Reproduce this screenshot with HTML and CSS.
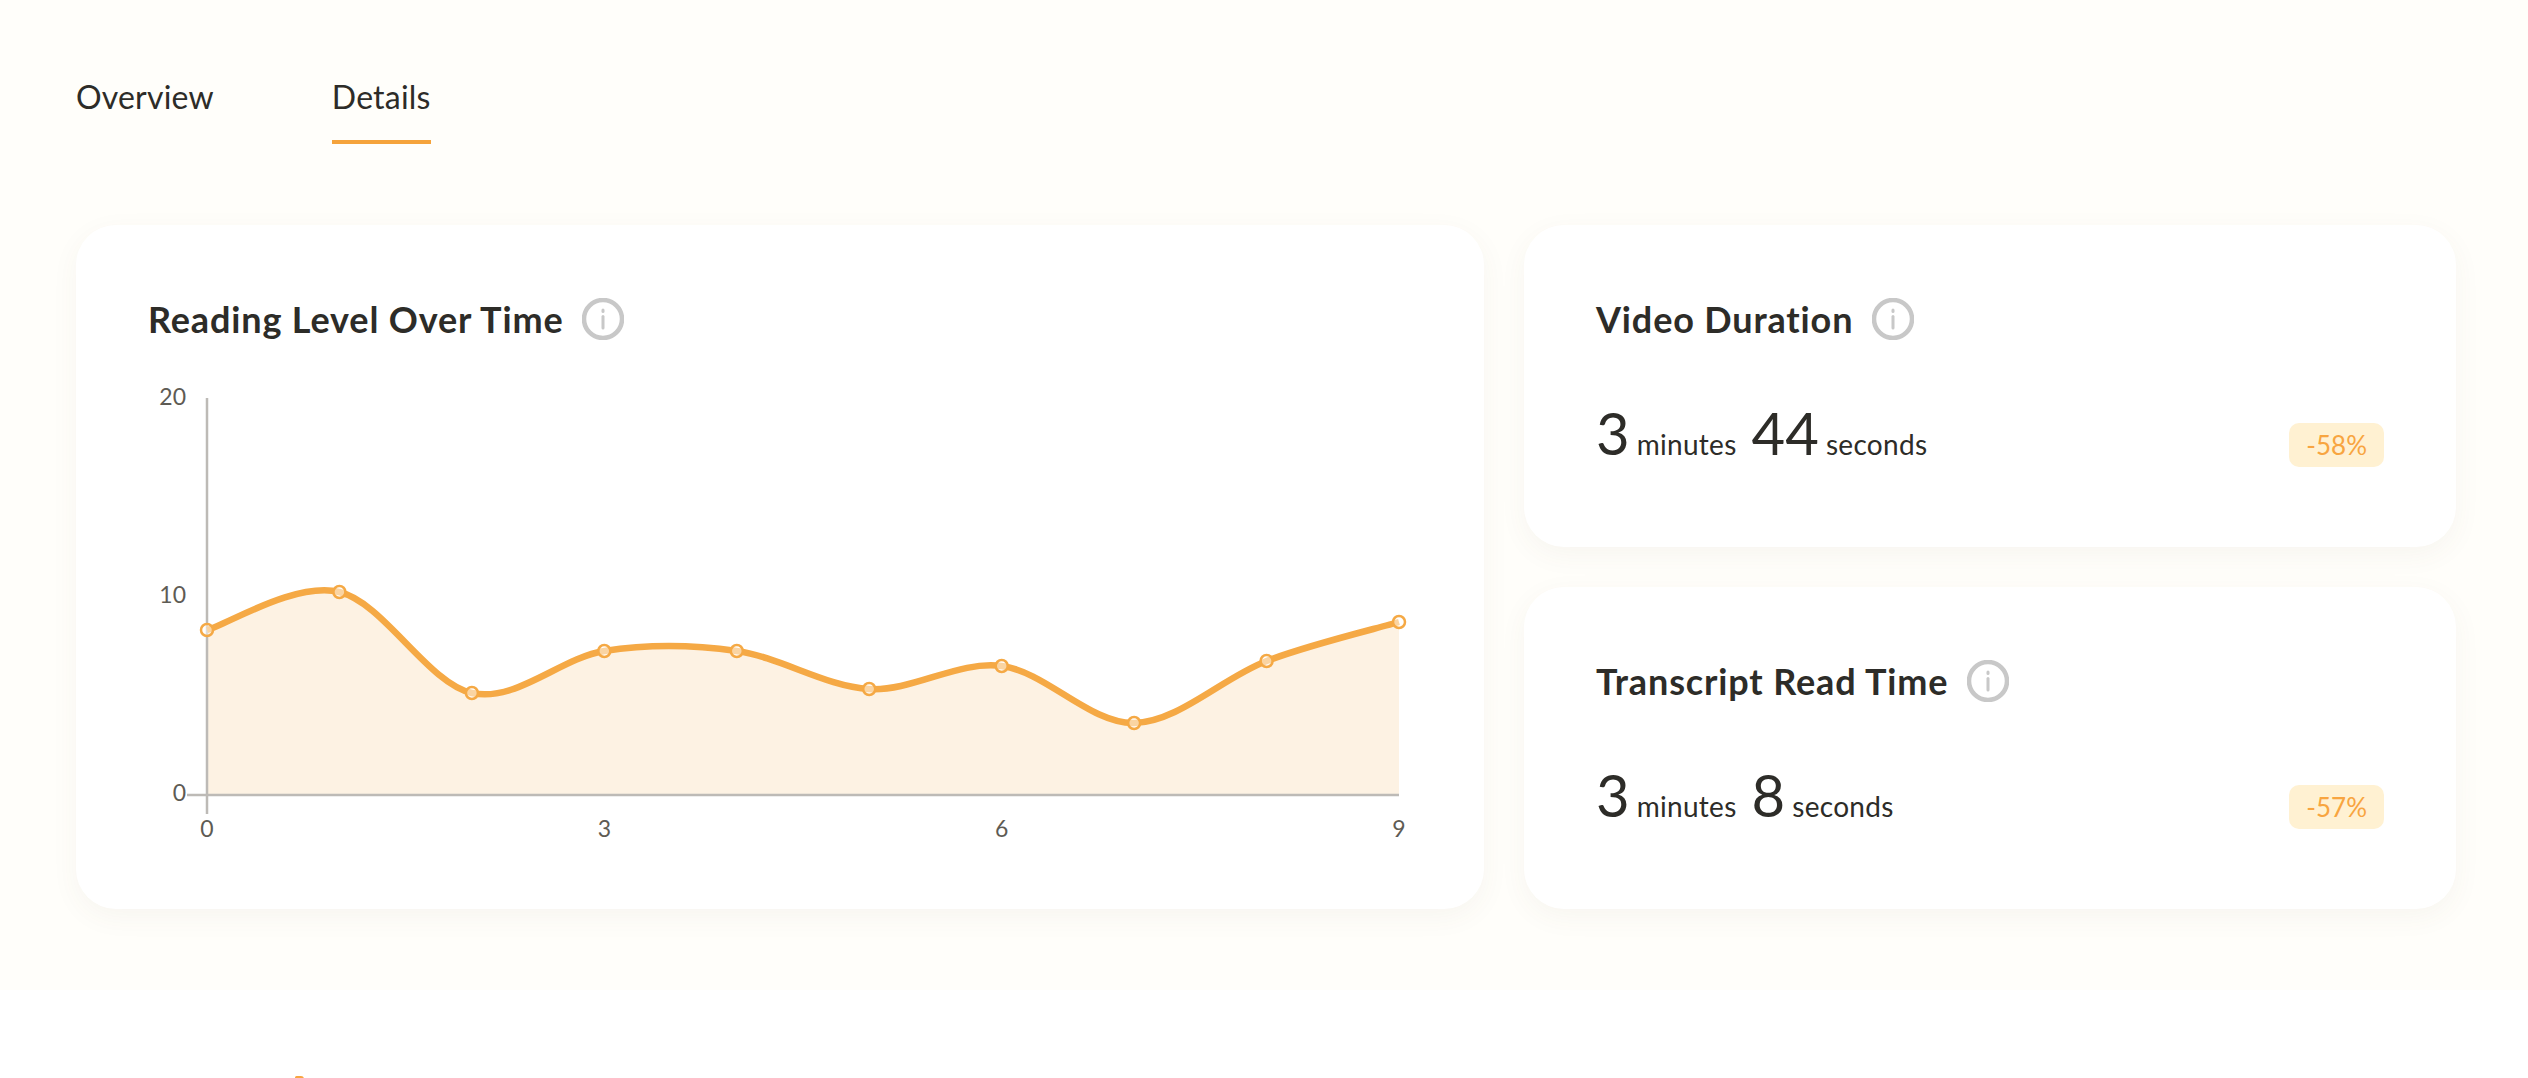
FILE: index.html
```html
<!DOCTYPE html>
<html lang="en">
<head>
    <meta charset="UTF-8">
    <meta name="viewport" content="width=device-width, initial-scale=1.0">
    <title>Details</title>
    <link rel="stylesheet" href="styles.css">
</head>
<body>
    <div class="details">
        <nav class="tabs">
            <a class="tab">Overview</a>
            <a class="tab active">Details</a>
        </nav>

        <div class="cards">
            <section class="card chart-card">
                <h2 class="card-title">Reading Level Over Time
                    <svg class="info" viewBox="0 0 42 42"><circle cx="21" cy="21" r="19" /><path d="M21 18.5V30" /><path d="M21 12v1.5" /></svg>
                </h2>
                <svg class="chart" viewBox="148 380 1264 480">
                    <path class="area" d="M207 629C229 622.67 295.3 580.5 339.4 591C383.5 601.5 427.8 682.17 471.9 692C516 701.83 560.2 657 604.3 650C648.4 643 692.7 643.67 736.8 650C780.9 656.33 825.1 685.5 869.2 688C913.3 690.5 957.6 659.33 1001.7 665C1045.8 670.67 1090 722.83 1134.1 722C1178.2 721.17 1222.5 676.83 1266.6 660C1310.7 643.17 1377 627.5 1399 621V794H207Z" />
                    <path class="axis" d="M207 397V813M187 794H1399" />
                    <path class="line" d="M207 629C229 622.67 295.3 580.5 339.4 591C383.5 601.5 427.8 682.17 471.9 692C516 701.83 560.2 657 604.3 650C648.4 643 692.7 643.67 736.8 650C780.9 656.33 825.1 685.5 869.2 688C913.3 690.5 957.6 659.33 1001.7 665C1045.8 670.67 1090 722.83 1134.1 722C1178.2 721.17 1222.5 676.83 1266.6 660C1310.7 643.17 1377 627.5 1399 621" />
                    <circle class="dot" cx="207" cy="629" r="6" />
                    <circle class="dot" cx="339.4" cy="591" r="6" />
                    <circle class="dot" cx="471.9" cy="692" r="6" />
                    <circle class="dot" cx="604.3" cy="650" r="6" />
                    <circle class="dot" cx="736.8" cy="650" r="6" />
                    <circle class="dot" cx="869.2" cy="688" r="6" />
                    <circle class="dot" cx="1001.7" cy="665" r="6" />
                    <circle class="dot" cx="1134.1" cy="722" r="6" />
                    <circle class="dot" cx="1266.6" cy="660" r="6" />
                    <circle class="dot" cx="1399" cy="621" r="6" />
                    <text class="tick-y" x="186" y="404">20</text>
                    <text class="tick-y" x="186" y="602">10</text>
                    <text class="tick-y" x="186" y="800">0</text>
                    <text class="tick-x" x="207" y="836">0</text>
                    <text class="tick-x" x="604.3" y="836">3</text>
                    <text class="tick-x" x="1001.7" y="836">6</text>
                    <text class="tick-x" x="1399" y="836">9</text>
                </svg>
            </section>

            <div class="side">
                <section class="card stat-card">
                    <h2 class="card-title">Video Duration
                        <svg class="info" viewBox="0 0 42 42"><circle cx="21" cy="21" r="19" /><path d="M21 18.5V30" /><path d="M21 12v1.5" /></svg>
                    </h2>
                    <div class="stat-row">
                        <div class="stat">
                            <span class="num">3</span><span class="unit">minutes</span>
                            <span class="num">44</span><span class="unit">seconds</span>
                        </div>
                        <span class="badge">-58%</span>
                    </div>
                </section>
                <section class="card stat-card">
                    <h2 class="card-title">Transcript Read Time
                        <svg class="info" viewBox="0 0 42 42"><circle cx="21" cy="21" r="19" /><path d="M21 18.5V30" /><path d="M21 12v1.5" /></svg>
                    </h2>
                    <div class="stat-row">
                        <div class="stat">
                            <span class="num">3</span><span class="unit">minutes</span>
                            <span class="num">8</span><span class="unit">seconds</span>
                        </div>
                        <span class="badge">-57%</span>
                    </div>
                </section>
            </div>
        </div>
    </div>

    <div class="below">
        <div class="peek"></div>
    </div>
</body>
</html>
```

FILE: styles.css
```css
html, body {
    height: 100%;
}

body {
    font-family: "Lato", Arial, sans-serif;
    margin: 0;
    padding: 0;
    background-color: #ffffff;
    color: #2d2c28;
    overflow: hidden;
}

.details {
    height: 990px;
    box-sizing: border-box;
    padding: 72px 72px 0 76px;
    background-color: #fffefa;
}

.tabs {
    display: flex;
    gap: 118px;
}

.tab {
    font-size: 32px;
    letter-spacing: 0.2px;
    line-height: 50px;
    padding-bottom: 18px;
    border-bottom: 4px solid transparent;
}

.tab.active {
    border-bottom-color: #f5a33b;
}

.cards {
    display: flex;
    gap: 40px;
    margin-top: 79px;
    padding-top: 2px;
}

.card {
    box-sizing: border-box;
    background-color: #ffffff;
    border-radius: 40px;
    box-shadow: 0 8px 28px rgba(90, 80, 50, 0.05);
}

.chart-card {
    width: 1408px;
    height: 684px;
    padding: 70px 72px;
}

.side {
    width: 932px;
    display: flex;
    flex-direction: column;
    gap: 40px;
}

.stat-card {
    flex: 1;
    padding: 70px 72px 0 72px;
}

.card-title {
    display: flex;
    align-items: center;
    gap: 19px;
    margin: 0;
    font-size: 36px;
    letter-spacing: 0.85px;
    line-height: 48px;
    font-weight: 700;
}

.info {
    width: 42px;
    height: 42px;
    fill: none;
    stroke: #c8c8c8;
    stroke-width: 4.5;
}

.info path {
    stroke-width: 3;
    stroke-linecap: round;
}

.chart {
    display: block;
    width: 1264px;
    height: 480px;
    margin-top: 38px;
    overflow: visible;
}

.area {
    fill: #fdf2e3;
}

.axis {
    fill: none;
    stroke: #bdbab6;
    stroke-width: 2.5;
}

.line {
    fill: none;
    stroke: #f5a945;
    stroke-width: 6.5;
}

.dot {
    fill: rgba(255, 255, 255, 0.5);
    stroke: #f5a945;
    stroke-width: 2.5;
}

.tick-y,
.tick-x {
    font-size: 23px;
    fill: #5e5b54;
}

.tick-y {
    text-anchor: end;
}

.tick-x {
    text-anchor: middle;
}

.stat-row {
    display: flex;
    justify-content: space-between;
    align-items: baseline;
    margin-top: 55px;
}

.stat {
    display: flex;
    align-items: baseline;
}

.num {
    font-size: 58px;
    line-height: 70px;
    margin-right: 7px;
}

.unit {
    font-size: 28px;
    letter-spacing: 0.3px;
    margin-right: 15px;
}

.badge {
    padding: 0 17px;
    height: 44px;
    line-height: 44px;
    font-size: 26px;
    color: #f8a540;
    background-color: #fff1d2;
    border-radius: 10px;
}

.below {
    position: relative;
    height: 88px;
}

/* top of something cut off by the bottom of the window */
.peek {
    position: absolute;
    left: 295px;
    top: 86px;
    width: 9px;
    height: 3px;
    background-color: #f8a540;
    border-radius: 3px 6px 0 0;
}
```
